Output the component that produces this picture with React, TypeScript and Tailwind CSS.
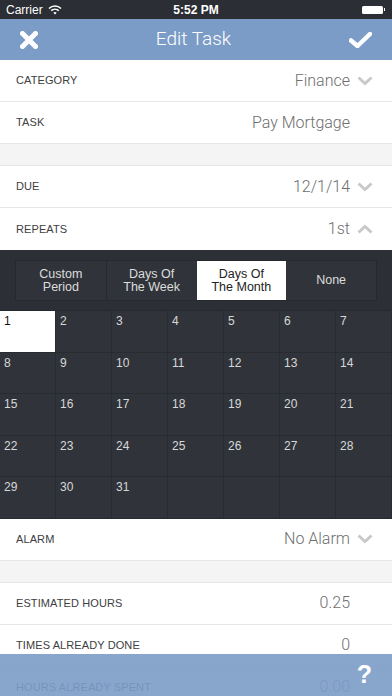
import React from "react";

const Chevron = ({ up = false }: { up?: boolean }) => (
  <svg width="16" height="10" viewBox="0 0 16 10" className="ml-[7px]">
    <path
      d={up ? "M1.5 8.5 L8 2.5 L14.5 8.5" : "M1.5 1.5 L8 7.5 L14.5 1.5"}
      fill="none"
      stroke="#c9c9c9"
      strokeWidth="3"
      strokeLinejoin="miter"
    />
  </svg>
);

const Row = ({
  label,
  value,
  chevron,
  up,
  border = true,
}: {
  label: string;
  value: string;
  chevron?: boolean;
  up?: boolean;
  border?: boolean;
}) => (
  <div
    className={`flex h-[42px] items-center bg-white pl-4 ${
      border ? "border-b border-[#e6e6e6]" : ""
    }`}
  >
    <div className="flex-1 text-[11px] tracking-[0.1px] text-[#404040]" style={{ fontFamily: '"Liberation Sans", Arial, sans-serif' }}>
      {label}
    </div>
    <div className="flex items-center pr-[19px]">
      <span
        className="text-[16px] font-light text-[#6e6e6e]"
        style={{ fontFamily: 'Roboto, "Liberation Sans", sans-serif' }}
      >
        {value}
      </span>
      {chevron ? <Chevron up={up} /> : <span className="w-[23px]" />}
    </div>
  </div>
);

const Spacer = () => <div className="h-[22px] border-b border-[#e6e6e6] bg-[#f4f4f4]" />;

export default function App() {
  const days: (number | null)[] = [];
  for (let i = 1; i <= 35; i++) days.push(i <= 31 ? i : null);
  const segs = [
    ["Custom", "Period"],
    ["Days Of", "The Week"],
    ["Days Of", "The Month"],
    ["None"],
  ];
  return (
    <div
      className="relative h-[696px] w-[392px] overflow-hidden bg-white"
      style={{ fontFamily: '"Liberation Sans", Arial, sans-serif' }}
    >
      {/* status bar */}
      <div className="relative flex h-[19px] items-center bg-[#2b2e34] px-[6px] text-white">
        <span className="text-[12px]">Carrier</span>
        <svg width="14" height="10" viewBox="0 0 14 10" className="ml-[5px]">
          <path d="M1 3.5 A8.5 8.5 0 0 1 13 3.5" fill="none" stroke="white" strokeWidth="1.6" />
          <path d="M3.2 5.7 A5.5 5.5 0 0 1 10.8 5.7" fill="none" stroke="white" strokeWidth="1.6" />
          <path d="M5.3 7.8 A2.5 2.5 0 0 1 8.7 7.8 L7 9.6 Z" fill="white" />
        </svg>
        <span className="absolute left-1/2 -translate-x-1/2 text-[12px] font-bold">5:52 PM</span>
        <div className="ml-auto flex items-center pr-[1px]">
          <div className="h-[8px] w-[21px] rounded-[1.5px] bg-white" />
          <div className="ml-[1px] h-[3px] w-[1.5px] bg-white" />
        </div>
      </div>
      {/* nav bar */}
      <div className="flex h-[41px] items-center justify-between bg-[#7b9cc6] px-[20px]">
        <svg width="18" height="18" viewBox="0 0 18 18">
          <path d="M2.5 2.5 L15.5 15.5 M15.5 2.5 L2.5 15.5" stroke="white" strokeWidth="5" strokeLinecap="round" />
        </svg>
        <span
          className="text-[19px] font-light text-white"
          style={{ fontFamily: 'Roboto, "Liberation Sans", sans-serif' }}
        >
          Edit Task
        </span>
        <svg width="23" height="16" viewBox="0 0 23 16">
          <path d="M2 8.5 L8.5 14 L21 2" fill="none" stroke="white" strokeWidth="4.5" strokeLinejoin="round" strokeLinecap="round" />
        </svg>
      </div>
      <Row label="CATEGORY" value="Finance" chevron />
      <Row label="TASK" value="Pay Mortgage" />
      <Spacer />
      <Row label="DUE" value="12/1/14" chevron />
      <Row label="REPEATS" value="1st" chevron up border={false} />
      {/* dark section */}
      <div className="bg-[#2c3036] pt-[10px]">
        <div className="mx-[15px] flex h-[41px] border border-[#262a2f] bg-[#30343a]">
          {segs.map((s, i) => (
            <div
              key={i}
              className={`flex flex-1 flex-col items-center justify-center text-center text-[12.5px] leading-[13px] ${
                i === 2 ? "bg-white text-[#222]" : "text-[#dcdcdc]"
              } ${i === 1 ? "border-l border-[#262a2f]" : ""}`}
            >
              {s.map((t, j) => (
                <span key={j}>{t}</span>
              ))}
            </div>
          ))}
        </div>
        <div className="mt-[9px] grid grid-cols-7 border-t border-[#262a2f]">
          {days.map((d, i) => (
            <div
              key={i}
              className={`h-[41.5px] border-b border-r border-[#282c31] px-[4px] pt-[1px] text-[12px] ${
                d === 1 ? "bg-white text-[#111]" : "bg-[#30343a] text-[#d8d8d8]"
              }`}
            >
              {d ?? ""}
            </div>
          ))}
        </div>
      </div>
      <Row label="ALARM" value="No Alarm" chevron />
      <Spacer />
      <Row label="ESTIMATED HOURS" value="0.25" />
      <Row label="TIMES ALREADY DONE" value="0" />
      <Row label="HOURS ALREADY SPENT" value="0.00" />
      {/* bottom overlay */}
      <div className="absolute bottom-0 left-0 right-0 flex h-[42px] items-center justify-end bg-[#7b9cc6]/90 pr-[20px]">
        <span className="text-[25px] font-bold text-white">?</span>
      </div>
    </div>
  );
}
